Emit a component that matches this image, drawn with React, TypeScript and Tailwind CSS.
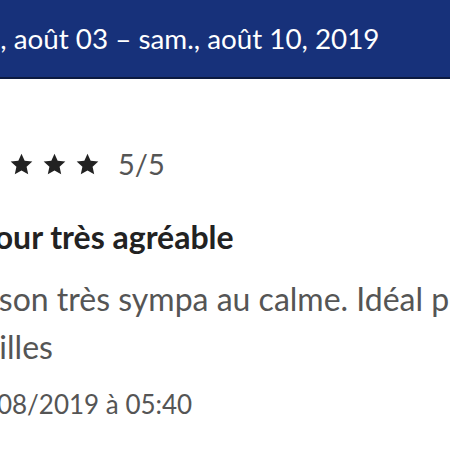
function StarIcon() {
  return (
    <svg viewBox="0 0 24 24" className="h-[23px] w-[23px] shrink-0 fill-[#222]">
      <polygon points="12,0.8 15.3,8.1 23.3,8.9 17.3,14.3 19,22.2 12,18.2 5,22.2 6.7,14.3 0.7,8.9 8.7,8.1" />
    </svg>
  );
}

export default function App() {
  return (
    <div className="h-[450px] w-[450px] overflow-hidden bg-white font-['Lato',sans-serif]">
      <header className="flex h-[79px] items-center border-b-2 border-[#0c1a40] bg-[#17317a]">
        <p className="-ml-[55px] whitespace-nowrap text-[27.8px] text-white">
          sam., août 03 – sam., août 10, 2019
        </p>
      </header>

      <div className="-ml-[45px] flex flex-col pt-[70px]">
        <div className="-ml-[11px] flex items-center gap-[10px]">
          {[0, 1, 2, 3, 4].map((i) => (
            <StarIcon key={i} />
          ))}
          <span className="ml-[9px] text-[29px] leading-[30px] text-[#555]">5/5</span>
        </div>

        <h2 className="-ml-[3px] mt-[38px] whitespace-nowrap text-[32px] font-bold leading-[40px] text-[#222]">
          Séjour très agréable
        </h2>

        <p className="-ml-[9px] mt-[18px] w-[640px] text-[32px] leading-[48px] text-[#555]">
          Maison très sympa au calme. Idéal pour les familles
        </p>

        <p className="mt-[14px] text-[26px] text-[#555]">10/08/2019 à 05:40</p>
      </div>
    </div>
  );
}
